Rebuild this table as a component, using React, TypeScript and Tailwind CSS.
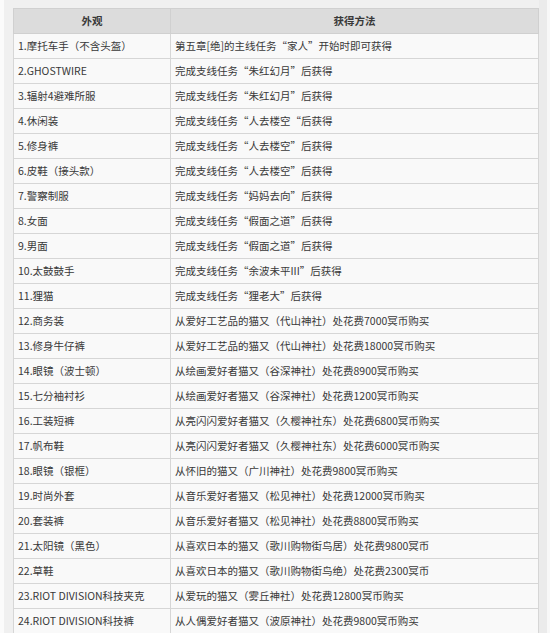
import React from 'react';

const rows: [string, string][] = [
  ['1.摩托车手（不含头盔）', '第五章[绝]的主线任务“家人”开始时即可获得'],
  ['2.GHOSTWIRE', '完成支线任务“朱红幻月”后获得'],
  ['3.辐射4避难所服', '完成支线任务“朱红幻月”后获得'],
  ['4.休闲装', '完成支线任务“人去楼空“后获得'],
  ['5.修身裤', '完成支线任务“人去楼空”后获得'],
  ['6.皮鞋（接头款）', '完成支线任务“人去楼空”后获得'],
  ['7.警察制服', '完成支线任务“妈妈去向”后获得'],
  ['8.女面', '完成支线任务“假面之道”后获得'],
  ['9.男面', '完成支线任务“假面之道”后获得'],
  ['10.太鼓鼓手', '完成支线任务“余波未平III”后获得'],
  ['11.狸猫', '完成支线任务“狸老大”后获得'],
  ['12.商务装', '从爱好工艺品的猫又（代山神社）处花费7000冥币购买'],
  ['13.修身牛仔裤', '从爱好工艺品的猫又（代山神社）处花费18000冥币购买'],
  ['14.眼镜（波士顿）', '从绘画爱好者猫又（谷深神社）处花费8900冥币购买'],
  ['15.七分袖衬衫', '从绘画爱好者猫又（谷深神社）处花费1200冥币购买'],
  ['16.工装短裤', '从亮闪闪爱好者猫又（久樱神社东）处花费6800冥币购买'],
  ['17.帆布鞋', '从亮闪闪爱好者猫又（久樱神社东）处花费6000冥币购买'],
  ['18.眼镜（银框）', '从怀旧的猫又（广川神社）处花费9800冥币购买'],
  ['19.时尚外套', '从音乐爱好者猫又（松见神社）处花费12000冥币购买'],
  ['20.套装裤', '从音乐爱好者猫又（松见神社）处花费8800冥币购买'],
  ['21.太阳镜（黑色）', '从喜欢日本的猫又（歌川购物街鸟居）处花费9800冥币'],
  ['22.草鞋', '从喜欢日本的猫又（歌川购物街鸟绝）处花费2300冥币'],
  ['23.RIOT DIVISION科技夹克', '从爱玩的猫又（雾丘神社）处花费12800冥币购买'],
  ['24.RIOT DIVISION科技裤', '从人偶爱好者猫又（波原神社）处花费9800冥币购买'],
];

// quotes are drawn full width, like the source font does
const Quoted: React.FC<{ text: string }> = ({ text }) => {
  const parts = text.split(/([“”])/);
  return (
    <>
      {parts.map((p, i) =>
        p === '“' ? (
          <span key={i} className="inline-block w-[1em] text-right">{p}</span>
        ) : p === '”' ? (
          <span key={i} className="inline-block w-[1em] text-left">{p}</span>
        ) : (
          <React.Fragment key={i}>{p}</React.Fragment>
        )
      )}
    </>
  );
};

const App: React.FC = () => {
  return (
    <div className="flex h-[633px] w-[550px] overflow-hidden bg-[#f7f7f7] font-['Microsoft_YaHei','Noto_Sans_CJK_SC',sans-serif] text-[10.5px] text-[#383838]">
      <div className="w-[4px] bg-[#fbfbfb]" />
      <div className="w-[9px] bg-[#f0f0f0]" />
      <div className="flex flex-col bg-[#f0f0f0] pt-[8px]">
        <table className="w-[525px] table-fixed border-collapse">
          <colgroup>
            <col className="w-[157px]" />
            <col className="w-[368px]" />
          </colgroup>
          <thead>
            <tr className="h-[25px] bg-[#dcdcdc]">
              <th className="border border-[#d0d0d0] text-center font-bold">外观</th>
              <th className="border border-[#d0d0d0] text-center font-bold">获得方法</th>
            </tr>
          </thead>
          <tbody>
            {rows.map((row, index) => (
              <tr key={index} className="h-[25px] bg-[#f9f9f9]">
                <td className="border border-[#d6d6d6] px-[4px] whitespace-nowrap">{row[0]}</td>
                <td className="border border-[#d6d6d6] px-[4px] whitespace-nowrap">
                  <Quoted text={row[1]} />
                </td>
              </tr>
            ))}
          </tbody>
        </table>
      </div>
      <div className="w-[8px] bg-[#ebebeb]" />
      <div className="flex-1 bg-[#f8f8f8]" />
    </div>
  );
};

export default App;
